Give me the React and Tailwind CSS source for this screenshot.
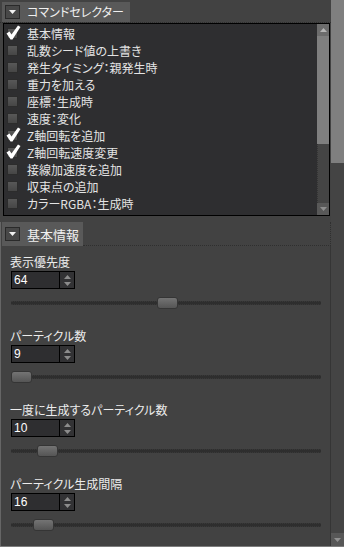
import React from "react";

const commands = [
	["基本情報", true],
	["乱数シード値の上書き", false],
	["発生タイミング：親発生時", false],
	["重力を加える", false],
	["座標：生成時", false],
	["速度：変化", false],
	["Z軸回転を追加", true],
	["Z軸回転速度変更", true],
	["接線加速度を追加", false],
	["収束点の追加", false],
	["カラーRGBA：生成時", false],
	["カラーRGBA：変化", false],
];

const fields = [
	{ label: "表示優先度", value: "64", thumb: 146 },
	{ label: "パーティクル数", value: "9", thumb: 0 },
	{ label: "一度に生成するパーティクル数", value: "10", thumb: 26 },
	{ label: "パーティクル生成間隔", value: "16", thumb: 22 },
];

function TabIcon() {
	return (
		<div className="w-[15px] h-[14px] shrink-0 bg-[#484848] border border-[#2a2a2a] flex items-center justify-center">
			<svg width="7" height="4" viewBox="0 0 7 4">
				<path d="M0 0 L7 0 L3.5 4 Z" fill="#f2f2f2" />
			</svg>
		</div>
	);
}

function Tab({ title, height, size, pad }) {
	return (
		<div
			className={`flex items-center gap-[7px] pl-[3px] bg-[#595959] whitespace-nowrap ${height} ${pad}`}
		>
			<TabIcon />
			<span className={`text-[#f0f0f0] leading-none ${size}`}>{title}</span>
		</div>
	);
}

function Arrow({ up, color = "#8c8c8c" }) {
	return (
		<svg width="7" height="4" viewBox="0 0 7 4">
			<path d={up ? "M0 4 L7 4 L3.5 0 Z" : "M0 0 L7 0 L3.5 4 Z"} fill={color} />
		</svg>
	);
}

function CheckRow({ text, checked }) {
	return (
		<div className="h-[17px] flex items-center shrink-0">
			<div className="relative ml-[3px] w-[11px] h-[11px] bg-gradient-to-b from-[#585858] to-[#464646] border border-[#2c2c2c]">
				{checked && (
					<svg
						className="absolute left-[-2px] top-[-4px]"
						width="15"
						height="15"
						viewBox="0 0 15 15"
					>
						<path
							d="M0.5 8.5 L3.5 6.5 L5.5 9.5 L12 0.5 L14.5 2 L6.5 14.5 L4.5 14.5 Z"
							fill="#ffffff"
						/>
					</svg>
				)}
			</div>
			<span className="ml-[9px] text-[12px] text-[#e4e4e4] leading-none whitespace-nowrap">
				{text}
			</span>
		</div>
	);
}

function Field({ label, value, thumb }) {
	return (
		<div className="mb-[11px]">
			<div className="h-[16px] leading-[16px] text-[12px] text-[#ececec] whitespace-nowrap">
				{label}
			</div>
			<div className="mt-[1px] ml-[1px] w-[64px] h-[18px] border border-black bg-[#2e2e30] flex">
				<div className="flex-1 pl-[2px] text-[12px] leading-[16px] text-white font-['Liberation_Sans',sans-serif]">
					{value}
				</div>
				<div className="w-[15px] border-l border-black flex flex-col items-center justify-center gap-[3px] bg-[#323234]">
					<Arrow up />
					<Arrow />
				</div>
			</div>
			<div className="relative h-[28px] ml-[1px] w-[310px] flex items-center">
				<div className="w-full h-[4px] bg-[#2e2e2e] border-y border-dotted border-[#383838]" />
				<div
					className="absolute top-[8px] w-[21px] h-[12px] rounded-[3px] border border-[#353535] bg-gradient-to-b from-[#747474] to-[#555]"
					style={{ left: thumb }}
				/>
			</div>
		</div>
	);
}

export default function App() {
	return (
		<div className="w-[344px] h-[547px] flex bg-[#424242] border-b border-[#7d7d7d] overflow-hidden font-['Noto_Sans_CJK_JP',sans-serif] [font-feature-settings:'palt']">
			<div className="w-[331px] flex flex-col">
				{/* command selector */}
				<div className="h-[23px] pt-[2px] pl-[2px] border-b border-dotted border-[#2f2f2f] flex">
					<Tab title="コマンドセレクター" height="h-[20px]" size="text-[12px]" pad="pr-[6px]" />
				</div>
				<div className="ml-[3px] w-[327px] h-[193px] border border-black bg-[#2e2e30] flex">
					<div className="flex-1 overflow-hidden pt-[1px] flex flex-col">
						{commands.map(([text, checked]) => (
							<CheckRow key={text} text={text} checked={checked} />
						))}
					</div>
					<div className="w-[12px] flex flex-col bg-[#444]">
						<div className="h-[12px] bg-[#6c6c6c] flex items-center justify-center">
							<Arrow up color="#b5b5b5" />
						</div>
						<div className="h-[108px] bg-[#7f7f7f]" />
						<div className="flex-1 border-l border-dotted border-[#333]" />
						<div className="h-[12px] bg-[#585858] flex items-center justify-center">
							<Arrow color="#8e8e8e" />
						</div>
					</div>
				</div>

				{/* basic info */}
				<div className="mt-[6px] flex-1 flex flex-col border-l border-[#666]">
					<div className="h-[24px] flex">
						<div className="ml-[1px]">
							<Tab title="基本情報" height="h-[24px]" size="text-[13px]" pad="pr-[4px]" />
						</div>
						<div className="flex-1 border-b border-r border-dotted border-[#2f2f2f]" />
					</div>
					<div className="flex-1 border-r border-[#353535] pt-[8px] pl-[9px]">
						{fields.map((f) => (
							<Field key={f.label} {...f} />
						))}
					</div>
				</div>
			</div>

			{/* outer scrollbar */}
			<div className="w-[13px] flex flex-col bg-[#444]">
				<div className="h-[163px] bg-[#7f7f7f]" />
				<div className="flex-1" />
				<div className="h-[13px] bg-[#575757] flex items-center justify-center">
					<Arrow color="#909090" />
				</div>
			</div>
		</div>
	);
}
